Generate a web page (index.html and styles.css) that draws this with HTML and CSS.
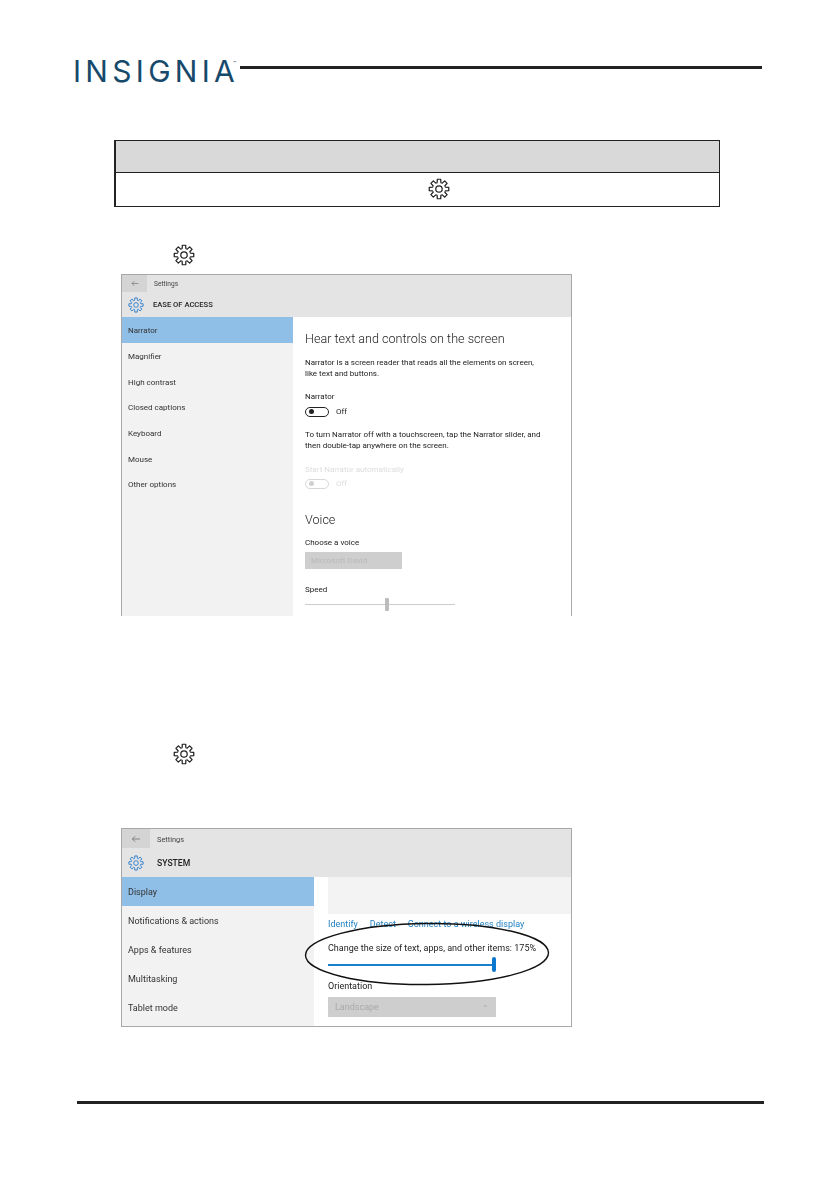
FILE: index.html
```html
<!DOCTYPE html>
<html lang="en">
<head>
<meta charset="utf-8">
<title>Insignia manual page</title>
<link rel="stylesheet" href="styles.css">
</head>
<body>
<svg class="defs" width="0" height="0" aria-hidden="true">
  <defs>
    <g id="tooth"><path d="M9.21 5.26L9.99 4.98L10.13 1.36H13.87L14.01 4.98L14.79 5.26"/></g>
    <symbol id="gear" viewBox="0 0 24 24">
      <g fill="none" stroke="currentColor" stroke-width="1.35" stroke-linejoin="round">
        <use href="#tooth"/>
        <use href="#tooth" transform="rotate(45 12 12)"/>
        <use href="#tooth" transform="rotate(90 12 12)"/>
        <use href="#tooth" transform="rotate(135 12 12)"/>
        <use href="#tooth" transform="rotate(180 12 12)"/>
        <use href="#tooth" transform="rotate(225 12 12)"/>
        <use href="#tooth" transform="rotate(270 12 12)"/>
        <use href="#tooth" transform="rotate(315 12 12)"/>
        <circle cx="12" cy="12" r="3.5"/>
      </g>
    </symbol>
    <symbol id="back" viewBox="0 0 12 10">
      <path d="M11 5H1.5M5 1.5L1.5 5L5 8.5" fill="none" stroke="currentColor" stroke-width="0.9"/>
    </symbol>
  </defs>
</svg>

<header class="brand">
  <div class="logo">INSIGNIA<span class="tm">™</span></div>
  <div class="brand-rule"></div>
</header>

<section class="note">
  <div class="note-head"></div>
  <div class="note-row"><svg class="gear gear-note"><use href="#gear"/></svg></div>
</section>

<div class="step-icon step-first"><svg class="gear"><use href="#gear"/></svg></div>

<figure class="shot shot-access">
  <div class="blur">
    <div class="win-head">
      <div class="win-top">
        <div class="back"><svg class="back-icon"><use href="#back"/></svg></div>
        <span class="win-label">Settings</span>
      </div>
      <div class="win-title">
        <svg class="gear-blue"><use href="#gear"/></svg>
        <span class="win-name">EASE OF ACCESS</span>
      </div>
    </div>
    <div class="win-body">
      <nav class="side">
        <div class="side-item active">Narrator</div>
        <div class="side-item">Magnifier</div>
        <div class="side-item">High contrast</div>
        <div class="side-item">Closed captions</div>
        <div class="side-item">Keyboard</div>
        <div class="side-item">Mouse</div>
        <div class="side-item">Other options</div>
      </nav>
      <div class="pane">
        <h2 class="pane-title">Hear text and controls on the screen</h2>
        <p class="para para-intro">Narrator is a screen reader that reads all the elements on screen,<br>like text and buttons.</p>
        <div class="label label-narrator">Narrator</div>
        <div class="toggle-row row-on"><span class="toggle"><i></i></span><span>Off</span></div>
        <p class="para para-turn">To turn Narrator off with a touchscreen, tap the Narrator slider, and<br>then double-tap anywhere on the screen.</p>
        <div class="label label-start dim">Start Narrator automatically</div>
        <div class="toggle-row row-off dim"><span class="toggle"><i></i></span><span>Off</span></div>
        <h2 class="pane-title voice">Voice</h2>
        <div class="label label-choose">Choose a voice</div>
        <div class="select voice-select">Microsoft David</div>
        <div class="label label-speed">Speed</div>
        <div class="slider speed-slider"><span class="thumb"></span></div>
      </div>
    </div>
  </div>
</figure>

<div class="step-icon step-second"><svg class="gear"><use href="#gear"/></svg></div>

<figure class="shot shot-system">
  <div class="blur">
    <div class="win-head">
      <div class="win-top">
        <div class="back"><svg class="back-icon"><use href="#back"/></svg></div>
        <span class="win-label">Settings</span>
      </div>
      <div class="win-title">
        <svg class="gear-blue"><use href="#gear"/></svg>
        <span class="win-name">SYSTEM</span>
      </div>
    </div>
    <div class="win-body">
      <nav class="side">
        <div class="side-item active">Display</div>
        <div class="side-item">Notifications &amp; actions</div>
        <div class="side-item">Apps &amp; features</div>
        <div class="side-item">Multitasking</div>
        <div class="side-item">Tablet mode</div>
      </nav>
      <div class="pane">
        <div class="stripe"></div>
        <div class="links"><span>Identify</span><span>Detect</span><span>Connect to a wireless display</span></div>
        <div class="label label-size">Change the size of text, apps, and other items: 175%</div>
        <div class="scale"><span class="thumb-blue"></span></div>
        <div class="label label-orient">Orientation</div>
        <div class="select orient-select"><span>Landscape</span><span class="chev">⌄</span></div>
      </div>
    </div>
  </div>
  <svg class="callout" viewBox="0 0 449 197" aria-hidden="true">
    <ellipse cx="305" cy="125" rx="121.5" ry="30.5" transform="rotate(-0.6 305 125)"/>
  </svg>
</figure>

<footer class="foot-rule"></footer>
</body>
</html>
```
FILE: styles.css
```css
* { box-sizing: border-box; }
html, body { margin: 0; padding: 0; background: #fff; }
body {
  width: 839px;
  height: 1191px;
  overflow: hidden;
  padding-top: 60px;
  font-family: Roboto, "Open Sans", sans-serif;
  color: #222;
}
.defs { position: absolute; }

/* Brand header */
.brand { display: flex; margin-left: 73px; height: 22px; width: 689px; }
.logo {
  position: relative;
  width: 167px;
  font-family: Inter, "Open Sans", sans-serif;
  font-size: 30px;
  font-weight: 400;
  line-height: 22px;
  letter-spacing: 4.3px;
  color: #17496b;
  white-space: nowrap;
}
.tm { position: absolute; left: 160px; top: -8px; font-size: 5px; letter-spacing: 0; }
.brand-rule { flex: 1; height: 3px; margin-top: 6px; background: #222; }

/* Note table */
.note {
  width: 606px;
  height: 67px;
  margin: 58px 0 0 114px;
  border: 1px solid #222;
  border-left-width: 2px;
}
.note-head { height: 32px; background: #d9d9d9; border-bottom: 1px solid #222; }
.note-row { height: 33px; padding: 5px 0 0 312px; }

.gear { display: block; width: 22px; height: 22px; color: #222; }
.step-icon { margin-left: 173px; }
.step-first { margin-top: 37px; }
.step-second { margin-top: 127px; }

/* Screenshots */
.shot { position: relative; margin: 0 0 0 121px; width: 451px; overflow: hidden; }
.blur { filter: blur(0.3px); height: 100%; }
.shot-access { margin-top: 8px; height: 342px; border: 1px solid #a8a8a8; border-bottom: 0; }
.shot-system { margin-top: 63px; height: 199px; border: 1px solid #a8a8a8; }

.win-head { background: #e4e4e4; }
.win-top { display: flex; align-items: center; }
.back { display: flex; align-items: center; justify-content: center; background: #d4d4d4; color: #666; }
.win-title { display: flex; align-items: center; }
.gear-blue { color: #2a7ccb; }
.win-name { font-weight: 500; color: #222; }
.win-label { color: #444; }
.win-body { display: flex; }
.side { background: #f2f2f2; flex: none; }
.side-item { display: flex; align-items: center; padding-left: 6px; color: #333; }
.side-item.active { background: #8fbee7; }
.pane { flex: 1; background: #fff; }

/* Ease of access window */
.shot-access .win-head { height: 42px; }
.shot-access .win-top { height: 17px; }
.shot-access .back { width: 25px; height: 17px; }
.shot-access .back-icon { width: 8px; height: 7px; }
.shot-access .win-label { margin-left: 7px; font-size: 6.6px; }
.shot-access .win-title { height: 25px; padding: 0 0 0 6px; }
.shot-access .gear-blue { width: 16px; height: 16px; }
.shot-access .win-name { margin-left: 9px; font-size: 7.6px; }
.shot-access .side { width: 171px; height: 300px; }
.shot-access .side-item { height: 25.7px; padding-top: 2px; font-size: 8px; }
.shot-access .pane { padding-left: 12px; font-size: 8px; }

.pane-title { margin: 14px 0 0; font-size: 12.6px; line-height: 16px; font-weight: 300; color: #222; }
.pane-title.voice { margin-top: 23px; }
.para { margin: 0; line-height: 11px; }
.para-intro { margin-top: 10px; }
.para-turn { margin-top: 12.5px; }
.label { line-height: 11px; white-space: nowrap; }
.label-narrator { margin-top: 12px; }
.label-start { margin-top: 13px; }
.label-choose { margin-top: 9.5px; }
.label-speed { margin-top: 15.5px; }
.dim { color: #dcdcdc; }
.toggle-row { display: flex; align-items: center; gap: 7px; height: 10px; }
.row-on { margin-top: 4.5px; }
.row-off { margin-top: 3.5px; }
.toggle {
  display: flex;
  align-items: center;
  width: 24px;
  height: 10px;
  padding-left: 3px;
  border: 1.2px solid #222;
  border-radius: 5px;
}
.toggle i { width: 5px; height: 5px; border-radius: 50%; background: #222; }
.dim .toggle { border-color: #d8d8d8; }
.dim .toggle i { background: #d0d0d0; }
.select { display: flex; align-items: center; background: #cecece; color: #b9b9b9; }
.voice-select { margin-top: 3.5px; width: 97px; height: 17px; padding-left: 6px; }
.slider { position: relative; margin-top: 2.5px; width: 150px; height: 13px; }
.slider::before { content: ""; position: absolute; left: 0; right: 0; top: 6px; height: 1px; background: #ccc; }
.thumb { position: absolute; left: 80px; top: 0; width: 4px; height: 13px; border-radius: 1px; background: #bdbdbd; }

/* System window */
.shot-system .win-head { height: 48px; }
.shot-system .win-top { height: 20px; }
.shot-system .back { width: 28px; height: 19px; align-self: flex-start; }
.shot-system .back-icon { width: 10px; height: 8px; }
.shot-system .win-label { margin-left: 7px; font-size: 7.4px; }
.shot-system .win-title { height: 28px; padding: 0 0 1px 6px; }
.shot-system .gear-blue { width: 16px; height: 16px; }
.shot-system .win-name { margin-left: 13px; font-size: 8.6px; }
.shot-system .side { width: 192px; height: 149px; }
.shot-system .side-item { height: 29px; font-size: 9px; }
.shot-system .pane { font-size: 9px; padding-left: 14px; }
.stripe { height: 37px; background: #f3f3f3; }
.links { display: flex; gap: 12px; margin-top: 4px; line-height: 13px; color: #1f7fc0; }
.label-size { margin-top: 11px; line-height: 13px; }
.scale { position: relative; margin-top: 2px; width: 168px; height: 15px; }
.scale::before { content: ""; position: absolute; left: 0; right: 0; top: 7px; height: 1.5px; background: #1a7fcc; }
.thumb-blue { position: absolute; right: 0; top: 0; width: 4.5px; height: 15px; border-radius: 2px; background: #0a78d0; }
.label-orient { margin-top: 8px; line-height: 13px; }
.orient-select { margin-top: 4px; width: 168px; height: 20px; padding: 0 7px; justify-content: space-between; color: #aaa; }
.chev { font-size: 8px; line-height: 8px; margin-top: -4px; }

.callout { position: absolute; left: 0; top: 0; width: 449px; height: 197px; fill: none; stroke: #111; stroke-width: 1.4; }

.foot-rule { width: 687px; height: 3px; margin: 74px 0 0 77px; background: #222; }
```
